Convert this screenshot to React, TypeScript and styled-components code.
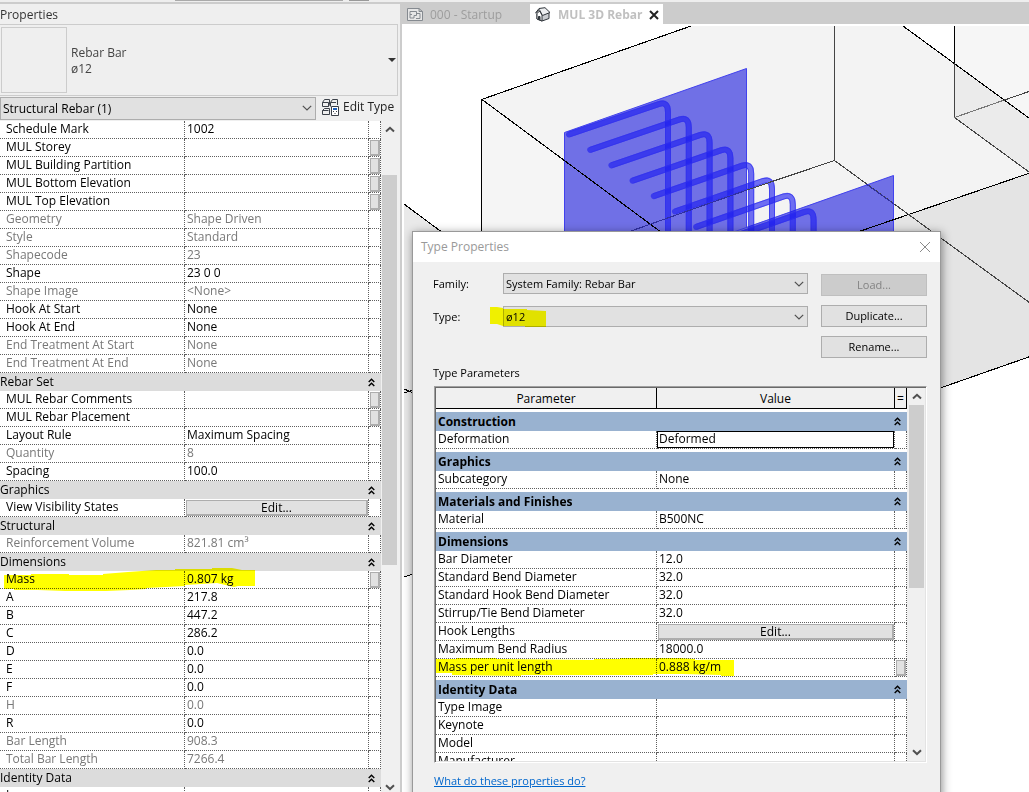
import React from 'react';
import styled, { createGlobalStyle, css } from 'styled-components';

const GlobalStyle = createGlobalStyle`
  *, *::before, *::after { box-sizing: border-box; }
  html, body, #root { height: 100%; }
  body {
    margin: 0;
    overflow: hidden;
    background: #fff;
    color: #000;
    font: 12px/18px "Open Sans", "Noto Sans", sans-serif;
  }
  button, select, input { font: inherit; color: inherit; margin: 0; border-radius: 0; }
`;

const dotted = '1px dotted #5f5f5f';

const Page = styled.div`
  height: 100vh;
  display: flex;
  flex-direction: column;
  overflow: hidden;
  background: #ccc;
`;

const Ribbon = styled.div`
  flex: none;
  display: flex;
  gap: 6px;
  height: 2px;
  padding-left: 175px;
  background: #eee;
`;

const RibbonEdge = styled.span<{ $width: number; $color: string }>`
  width: ${(p) => p.$width}px;
  height: 1px;
  background: ${(p) => p.$color};
`;

const Workspace = styled.div`
  flex: 1;
  min-height: 0;
  display: flex;
  gap: 2px;
  padding-top: 2px;
`;

/* Properties palette */

const Palette = styled.aside`
  flex: none;
  width: 400px;
  display: flex;
  flex-direction: column;
  background: #efefef;
`;

const PaletteTitle = styled.h2`
  margin: 0;
  height: 20px;
  font-size: 12px;
  font-weight: 400;
  line-height: 22px;
  color: #333;
`;

const TypeCard = styled.div`
  display: flex;
  align-items: center;
  gap: 4px;
  height: 72px;
  margin-right: 2px;
  padding: 0 1px;
  border: 1px solid #ccc;
  border-left: 0;
  color: #444;
  line-height: 16px;
`;

const Thumb = styled.div`
  width: 66px;
  height: 66px;
  border: 1px solid #ccc;
`;

const TypeName = styled.div`
  flex: 1;
  padding-top: 2px;
`;

const DropArrow = styled.button`
  border: 0;
  padding: 0;
  background: none;
  line-height: 0;
`;

const FilterRow = styled.div`
  display: flex;
  gap: 5px;
  padding: 1px 0;
  height: 25px;
`;

const SelectBox = styled.span<{ $height: number }>`
  position: relative;
  flex: 1;
  display: flex;
  height: ${(p) => p.$height}px;
  select {
    appearance: none;
    width: 100%;
    padding: 0 20px 0 2px;
    border: 1px solid #adadad;
    background: #e1e1e1;
    line-height: 18px;
  }
  svg {
    position: absolute;
    right: 4px;
    top: 8px;
    pointer-events: none;
  }
`;

const EditType = styled.button`
  display: flex;
  align-items: center;
  gap: 4px;
  width: 79px;
  height: 20px;
  padding: 0 0 0 1px;
  border: 0;
  background: none;
  color: #222;
  white-space: nowrap;
`;

const Scroller = styled.div`
  flex: 1;
  min-height: 0;
  margin-bottom: -4px;
  display: flex;
`;

const SheetView = styled.div`
  flex: 1;
  overflow: hidden;
  background: #fff;
`;

const Sheet = styled.table<{ $label: number; $button: number }>`
  width: 100%;
  table-layout: fixed;
  border-collapse: separate;
  border-spacing: 0;
  col.label { width: ${(p) => p.$label}px; }
  col.button { width: ${(p) => p.$button}px; }
`;

const Row = styled.tr<{ $dim?: boolean }>`
  position: relative;
  height: 18px;
  color: ${(p) => (p.$dim ? '#787878' : '#000')};
`;

const cell = css`
  height: 18px;
  padding: 0 0 2px;
  border-right: ${dotted};
  border-bottom: ${dotted};
  font-weight: 400;
  line-height: 15px;
  text-align: left;
  white-space: nowrap;
`;

const Name = styled.th<{ $indent: number }>`
  ${cell}
  padding-left: ${(p) => p.$indent}px;
`;

const Value = styled.td`
  ${cell}
  padding-left: 2px;
`;

const ControlCell = styled.td`
  ${cell}
  padding: 0 0 0 1px;
`;

const InputCell = styled.td`
  ${cell}
  padding: 0;
`;

const raised = css`
  border: 1px solid #adadad;
  border-right-width: 2px;
  border-bottom-width: 2px;
  background: #e1e1e1;
`;

const CellButton = styled.button`
  ${raised}
  display: block;
  width: 100%;
  height: 16px;
  padding: 0;
  line-height: 13px;
`;

const MiniButton = styled.button`
  ${raised}
  display: block;
  width: 10px;
  height: 16px;
  padding: 0;
`;

const CellInput = styled.input`
  display: block;
  width: 100%;
  height: 17px;
  padding: 0 0 2px 1px;
  border: 1px solid #000;
  background: #fff;
`;

const GroupCell = styled.th<{ $strong?: boolean }>`
  height: ${(p) => (p.$strong ? 22 : 18)}px;
  padding: 0 6px 0 ${(p) => (p.$strong ? 2 : 0)}px;
  border-top: ${(p) => (p.$strong ? '3px solid #fff' : '0')};
  background: ${(p) => (p.$strong ? '#99b2d0' : '#dcdcdc')};
  color: #000;
  font-weight: ${(p) => (p.$strong ? 700 : 400)};
  line-height: 18px;
  text-align: left;
`;

const GroupLine = styled.div`
  display: flex;
  justify-content: space-between;
  align-items: center;
`;

const Marker = styled.svg`
  position: absolute;
  left: 0;
  top: -4px;
  pointer-events: none;
  mix-blend-mode: multiply;
`;

const ScrollBar = styled.div<{ $left: number; $right: number }>`
  flex: none;
  display: flex;
  flex-direction: column;
  align-items: center;
  padding: 0 ${(p) => p.$right}px 0 ${(p) => p.$left}px;
  background: #f0f0f0;
`;

const ScrollButton = styled.button`
  flex: none;
  display: flex;
  align-items: center;
  justify-content: center;
  width: 15px;
  height: 17px;
  padding: 0;
  border: 0;
  background: none;
`;

const Track = styled.div`
  flex: 1;
  width: 15px;
  display: flex;
  flex-direction: column;
`;

const TrackGap = styled.div<{ $grow: number }>`
  flex: ${(p) => p.$grow} 0 0;
`;

const TrackThumb = styled.div<{ $grow: number }>`
  flex: ${(p) => p.$grow} 0 0;
  background: #cdcdcd;
`;

/* Drawing area */

const Viewer = styled.main`
  position: relative;
  flex: 1;
  min-width: 0;
  display: flex;
  flex-direction: column;
`;

const Tabs = styled.nav`
  flex: none;
  display: flex;
  height: 20px;
`;

const Tab = styled.div<{ $active?: boolean }>`
  display: flex;
  align-items: center;
  gap: ${(p) => (p.$active ? 7 : 6)}px;
  width: ${(p) => (p.$active ? 133 : 128)}px;
  padding: 1px 0 0 5px;
  background: ${(p) => (p.$active ? '#fff' : 'transparent')};
  color: ${(p) => (p.$active ? '#c0c0c0' : '#9d9d9d')};
  font-weight: ${(p) => (p.$active ? 700 : 400)};
  white-space: nowrap;
`;

const IconButton = styled.button`
  display: flex;
  padding: 0;
  border: 0;
  background: none;
`;

const Canvas = styled.div`
  flex: 1;
  min-height: 0;
  overflow: hidden;
  background: #fff;
  svg { display: block; }
`;

/* Type properties dialog */

const Dialog = styled.section`
  position: absolute;
  left: 10px;
  top: 227px;
  width: 529px;
  height: 600px;
  display: flex;
  flex-direction: column;
  border: 1px solid #999;
  background: #f0f0f0;
  box-shadow: 1px 2px 9px rgba(0, 0, 0, 0.45);
`;

const DialogTitle = styled.header`
  flex: none;
  display: flex;
  align-items: center;
  justify-content: space-between;
  height: 30px;
  padding: 0 9px 0 8px;
  background: #fff;
  color: #999;
`;

const DialogBody = styled.div`
  display: flex;
  flex-direction: column;
  padding: 11px 13px 0 20px;
`;

const Form = styled.div`
  display: flex;
  gap: 13px;
  font-size: 11px;
`;

const Fields = styled.div`
  flex: 1;
  display: flex;
  flex-direction: column;
  gap: 12px;
`;

const Field = styled.div`
  position: relative;
  display: flex;
  align-items: center;
  height: 21px;
  label { width: 70px; }
`;

const Actions = styled.div`
  display: flex;
  flex-direction: column;
  gap: 9px;
  padding-top: 1px;
`;

const Action = styled.button`
  width: 106px;
  height: 22px;
  padding: 0;
  border: 1px solid #adadad;
  background: #e1e1e1;
  &:disabled { border-color: #bfbfbf; background: #ccc; color: #838383; }
`;

const Caption = styled.h3`
  margin: 6px 0 4px;
  font-size: 11px;
  font-weight: 400;
  line-height: 18px;
`;

const Grid = styled.div`
  display: flex;
  height: 377px;
  margin-left: 1px;
  border: 1px solid;
  border-color: #a0a0a0 #fff #fff #a0a0a0;
  box-shadow: inset 1px 1px 0 #696969, inset -1px -1px 0 #e3e3e3;
  padding: 1px;
  background: #fff;
`;

const HeadCell = styled.th`
  height: 21px;
  padding: 0;
  border-right: 1px solid #000;
  border-bottom: 1px solid #000;
  background: #f0f0f0;
  font-weight: 400;
  line-height: 19px;
`;

const HelpLink = styled.a`
  align-self: flex-start;
  margin: 9px 0 0 1px;
  color: #0066cc;
  font-size: 11px;
`;

const Swipe = styled.svg`
  position: absolute;
  left: 56px;
  top: -1px;
  pointer-events: none;
  mix-blend-mode: multiply;
`;

const Chevron = ({ up }: { up?: boolean }) => (
  <svg width="10" height="7" viewBox="0 0 10 7" fill="none" stroke="#505050" strokeWidth="2">
    <path d={up ? 'M1 5.5 5 1.8 9 5.5' : 'M1 1.2 5 5 9 1.2'} />
  </svg>
);

const SelectChevron = () => (
  <svg width="10" height="6" viewBox="0 0 10 6" fill="none" stroke="#505050" strokeWidth="1.2">
    <path d="M.8.8 5 5 9.200.8" />
  </svg>
);

const Collapse = () => (
  <svg width="7" height="9" viewBox="0 0 7 9" fill="none" stroke="#000" strokeWidth="1.4">
    <path d="M.7 4 3.500 1.200 6.300 4M.7 8 3.500 5.200 6.300 8" />
  </svg>
);

type Param = {
  name: string;
  value?: string;
  dim?: boolean;
  mini?: boolean;
  edit?: boolean;
  input?: boolean;
  marker?: string;
};
type Group = { title?: string; rows: Param[] };

const instanceGroups: Group[] = [
  {
    rows: [
      { name: 'Schedule Mark', value: '1002' },
      { name: 'MUL Storey', mini: true },
      { name: 'MUL Building Partition', mini: true },
      { name: 'MUL Bottom Elevation', mini: true },
      { name: 'MUL Top Elevation', mini: true },
      { name: 'Geometry', value: 'Shape Driven', dim: true },
      { name: 'Style', value: 'Standard', dim: true },
      { name: 'Shapecode', value: '23', dim: true },
      { name: 'Shape', value: '23 0 0' },
      { name: 'Shape Image', value: '<None>', dim: true },
      { name: 'Hook At Start', value: 'None' },
      { name: 'Hook At End', value: 'None' },
      { name: 'End Treatment At Start', value: 'None', dim: true },
      { name: 'End Treatment At End', value: 'None', dim: true },
    ],
  },
  {
    title: 'Rebar Set',
    rows: [
      { name: 'MUL Rebar Comments', mini: true },
      { name: 'MUL Rebar Placement', mini: true },
      { name: 'Layout Rule', value: 'Maximum Spacing' },
      { name: 'Quantity', value: '8', dim: true },
      { name: 'Spacing', value: '100.0' },
    ],
  },
  { title: 'Graphics', rows: [{ name: 'View Visibility States', edit: true }] },
  { title: 'Structural', rows: [{ name: 'Reinforcement Volume', value: '821.81 cm³', dim: true }] },
  {
    title: 'Dimensions',
    rows: [
      {
        name: 'Mass',
        value: '0.807 kg',
        mini: true,
        marker: 'M4 8H31V7H69V8H103V7L128 5 156 3V3H175V2H212V1H232L242 3H255V19H238L234 20 217 16 185 18V19L146 21V22L130 23 106 24H65L38 23H14V22H4Z',
      },
      { name: 'A', value: '217.8' },
      { name: 'B', value: '447.2' },
      { name: 'C', value: '286.2' },
      { name: 'D', value: '0.0' },
      { name: 'E', value: '0.0' },
      { name: 'F', value: '0.0' },
      { name: 'H', value: '0.0', dim: true },
      { name: 'R', value: '0.0' },
      { name: 'Bar Length', value: '908.3', dim: true },
      { name: 'Total Bar Length', value: '7266.4', dim: true },
    ],
  },
  { title: 'Identity Data', rows: [{ name: 'Image' }] },
];

const typeGroups: Group[] = [
  { title: 'Construction', rows: [{ name: 'Deformation', value: 'Deformed', input: true }] },
  { title: 'Graphics', rows: [{ name: 'Subcategory', value: 'None' }] },
  { title: 'Materials and Finishes', rows: [{ name: 'Material', value: 'B500NC' }] },
  {
    title: 'Dimensions',
    rows: [
      { name: 'Bar Diameter', value: '12.0' },
      { name: 'Standard Bend Diameter', value: '32.0' },
      { name: 'Standard Hook Bend Diameter', value: '32.0' },
      { name: 'Stirrup/Tie Bend Diameter', value: '32.0' },
      { name: 'Hook Lengths', edit: true },
      { name: 'Maximum Bend Radius', value: '18000.0' },
      {
        name: 'Mass per unit length',
        value: '0.888 kg/m',
        mini: true,
        marker: 'M0 4H20V3H60V4L158 5V4H184V3H244L259 4V5H298V21H285V20L246 19H217V20H85V21L16 20V18H0Z',
      },
    ],
  },
  {
    title: 'Identity Data',
    rows: [{ name: 'Type Image' }, { name: 'Keynote' }, { name: 'Model' }, { name: 'Manufacturer' }],
  },
];

function ParamValue({ param }: { param: Param }) {
  if (param.edit) return <ControlCell><CellButton>Edit...</CellButton></ControlCell>;
  if (param.input) {
    return <InputCell><CellInput aria-label={param.name} defaultValue={param.value} /></InputCell>;
  }
  return <Value>{param.value}</Value>;
}

function ParamRow({ param, indent }: { param: Param; indent: number }) {
  return (
    <Row $dim={param.dim}>
      <Name scope="row" $indent={indent}>
        {param.name}
        {param.marker && (
          <Marker width="310" height="26" aria-hidden="true">
            <path d={param.marker} fill="#ff0" />
          </Marker>
        )}
      </Name>
      <ParamValue param={param} />
      <ControlCell>{param.mini && <MiniButton aria-label={`Associate ${param.name}`} />}</ControlCell>
    </Row>
  );
}

function Groups({ groups, strong, indent }: { groups: Group[]; strong?: boolean; indent: number }) {
  return (
    <>
      {groups.map((group, i) => (
        <tbody key={group.title ?? i}>
          {group.title && (
            <tr>
              <GroupCell colSpan={3} scope="rowgroup" $strong={strong}>
                <GroupLine>{group.title}<Collapse /></GroupLine>
              </GroupCell>
            </tr>
          )}
          {group.rows.map((param) => <ParamRow key={param.name} param={param} indent={indent} />)}
        </tbody>
      ))}
    </>
  );
}

type ScrollProps = { before: number; thumb: number; after: number; left: number; right: number };

function Scroll({ before, thumb, after, left, right }: ScrollProps) {
  return (
    <ScrollBar $left={left} $right={right}>
      <ScrollButton aria-label="Scroll up"><Chevron up /></ScrollButton>
      <Track>
        <TrackGap $grow={before} />
        <TrackThumb $grow={thumb} />
        <TrackGap $grow={after} />
      </Track>
      <ScrollButton aria-label="Scroll down"><Chevron /></ScrollButton>
    </ScrollBar>
  );
}

const barPath = (i: number, o: number) => {
  const x = 569 + 21.2 * i;
  const y = 134.5 + 15.4 * i;
  const right = 668 + 20.8 * i;
  const top = 101 + 15.4 * i;
  return `M${x - o * 0.33} ${y - o * 0.94}L${right - 9 - o * 0.33} ${top + 3 - o * 0.94}Q${right + o} ${top - o} ${right + o} ${top + 11}V300`;
};

const Scene = () => (
  <svg width="100%" height="100%" aria-label="3D rebar view">
    <g transform="translate(-402 -24)">
      <path d="M404 204 482 262V99L691 26H1100V332L404 577Z" fill="#f3f3f3" />
      <path d="M482 99 660 231H482Z" fill="#f5f5f5" />
      <path d="M404 204 482 262 800 500V440L404 577Z" fill="#e9e9e9" />
      <path d="M903 26H954V63Z" fill="#fff" />
      <path d="M954 26H1100V170L954 63Z" fill="#f6f6f6" />
      <path d="M954 63 1100 170V224L954 117Z" fill="#ebebeb" />
      <path d="M1100 149 800 252V436L1100 332Z" fill="#e4e4e4" />
      <path d="M564.500 132.500 746.500 68.500V300H564.500Z" fill="#7070e6" stroke="#4141ee" />
      <path d="M893.500 175.500V300H564L740 229.500Z" fill="#7070e6" />
      <path d="M735 231.500 893.500 175.500V300" fill="none" stroke="#4141ee" />
      {Array.from({ length: 8 }, (_, i) => (
        <g key={i} fill="none">
          <path d={barPath(i, 0)} stroke="#1c1cf0" strokeWidth="6" strokeLinecap="round" opacity=".62" />
          <path d={barPath(i, 2.5)} stroke="#3030ee" opacity=".7" />
          <path d={barPath(i, -2.5)} stroke="#3030ee" opacity=".7" />
        </g>
      ))}
      <g fill="none" stroke="#000" strokeWidth="1.100" shapeRendering="crispEdges">
        <path d="M481.500 400V99.500L691 26M482 99.500 700 261M404 204 482 262M903 26 1100 170M1100 149 840 238M954.500 26V63M936 389.500 1100 332M404 389 413 393M404 393 413 390M404 577 413 574" />
        <path stroke="#444" d="M834.500 26V160.500L747 190M834.500 160.500 1100 354M954.500 63V117.500L1029 172M1003 100.500 1100 67" />
        <path stroke="#777" d="M954.500 117.500 1003 100.500" />
        <path stroke="#3030a0" d="M747 190 631 231M866 184 894 204" />
      </g>
    </g>
  </svg>
);

export default function App() {
  return (
    <>
      <GlobalStyle />
      <Page>
        <Ribbon>
          <RibbonEdge $width={168} $color="#aaa" />
          <RibbonEdge $width={20} $color="#999" />
        </Ribbon>
        <Workspace>
          <Palette>
            <PaletteTitle>Properties</PaletteTitle>
            <TypeCard>
              <Thumb />
              <TypeName>Rebar Bar<br />ø12</TypeName>
              <DropArrow aria-label="Change type">
                <svg width="8" height="4"><path d="M0 0H8L4 4Z" fill="#333" /></svg>
              </DropArrow>
            </TypeCard>
            <FilterRow>
              <SelectBox $height={23}>
                <select aria-label="Element filter"><option>Structural Rebar (1)</option></select>
                <SelectChevron />
              </SelectBox>
              <EditType>
                <svg width="17" height="17" viewBox="0 0 17 17" fill="none" stroke="#3b4048">
                  <path d="M.5 3.500 2.500.5H7.500V5.500L6.500 7.500H.5ZM.5 3.500H6.500V7.500M8.500 7.500V3.500L10.500.5H15.500V6M8.500 3.500H14M.5 11.500 2.500 9.500H7.500M.5 11.500V15.500H7.500V9.500M.5 11.500H6.500" />
                  <path d="M9.500 7.500H16.500V16.500H9.500Z" fill="#fff" />
                  <path d="M11 10H15" stroke="#1f5fb8" strokeWidth="2" />
                  <path d="M11 12.500H12M14 12.500H15M12.500 14.500H13.500" />
                </svg>
                Edit Type
              </EditType>
            </FilterRow>
            <Scroller>
              <SheetView>
                <Sheet $label={185} $button={12}>
                  <colgroup><col className="label" /><col /><col className="button" /></colgroup>
                  <Groups groups={instanceGroups} indent={6} />
                </Sheet>
              </SheetView>
              <Scroll before={37} thumb={390} after={214} left={1} right={3} />
            </Scroller>
          </Palette>
          <Viewer>
            <Tabs>
              <Tab>
                <svg width="17" height="15" viewBox="0 0 17 15" fill="none" stroke="#858a90">
                  <path d="M.5 1.500H12L15.500 4.500V13.500H.5ZM12 1.500V4.500H15.500" fill="#e6e6e6" />
                  <path d="M3 4.500H9.500V8.500H7V11H3ZM3 7.500H5M9.500 6.500H13V11.500H9" />
                </svg>
                000 - Startup
              </Tab>
              <Tab $active>
                <svg width="16" height="15" viewBox="0 0 16 15" stroke="#2f343a" strokeLinejoin="round">
                  <path d="M2 6.500V12L7 14 14 11.500V6L8 2Z" fill="#c9ccd0" />
                  <path d="M2 6.500 4.500 4 7 8V14L2 12Z" fill="#fff" />
                  <path d="M.6 6 4 1.500 10 .7 15 5.500 7.500 8.500 4.300 2.500Z" fill="#eceef0" />
                  <path d="M3.500 12.500V9.500H5V13" fill="#3f444a" />
                </svg>
                MUL 3D Rebar
                <IconButton aria-label="Close view">
                  <svg width="10" height="10" stroke="#222" strokeWidth="2"><path d="M1 1 9 9M9 1 1 9" /></svg>
                </IconButton>
              </Tab>
            </Tabs>
            <Canvas><Scene /></Canvas>
            <Dialog role="dialog" aria-label="Type Properties">
              <DialogTitle>
                Type Properties
                <IconButton aria-label="Close">
                  <svg width="12" height="12" stroke="#8a8a8a"><path d="M1 1 11 11M11 1 1 11" /></svg>
                </IconButton>
              </DialogTitle>
              <DialogBody>
                <Form>
                  <Fields>
                    <Field>
                      <label htmlFor="family">Family:</label>
                      <SelectBox $height={21}>
                        <select id="family"><option>System Family: Rebar Bar</option></select>
                        <SelectChevron />
                      </SelectBox>
                    </Field>
                    <Field>
                      <label htmlFor="type">Type:</label>
                      <SelectBox $height={21}>
                        <select id="type"><option>ø12</option></select>
                        <SelectChevron />
                      </SelectBox>
                      <Swipe width="60" height="24" aria-hidden="true">
                        <path d="M1 2H8L14 3V4H38V5L57 6V22H36V21H14L8 19H1Z" fill="#ff0" />
                      </Swipe>
                    </Field>
                  </Fields>
                  <Actions>
                    <Action disabled>Load...</Action>
                    <Action>Duplicate...</Action>
                    <Action>Rename...</Action>
                  </Actions>
                </Form>
                <Caption>Type Parameters</Caption>
                <Grid>
                  <SheetView>
                    <Sheet $label={221} $button={12}>
                      <colgroup><col className="label" /><col /><col className="button" /></colgroup>
                      <thead>
                        <tr>
                          <HeadCell scope="col">Parameter</HeadCell>
                          <HeadCell scope="col">Value</HeadCell>
                          <HeadCell scope="col">=</HeadCell>
                        </tr>
                      </thead>
                      <Groups groups={typeGroups} strong indent={2} />
                    </Sheet>
                  </SheetView>
                  <Scroll before={0} thumb={183} after={156} left={2} right={1} />
                </Grid>
                <HelpLink href="#help">What do these properties do?</HelpLink>
              </DialogBody>
            </Dialog>
          </Viewer>
        </Workspace>
      </Page>
    </>
  );
}
